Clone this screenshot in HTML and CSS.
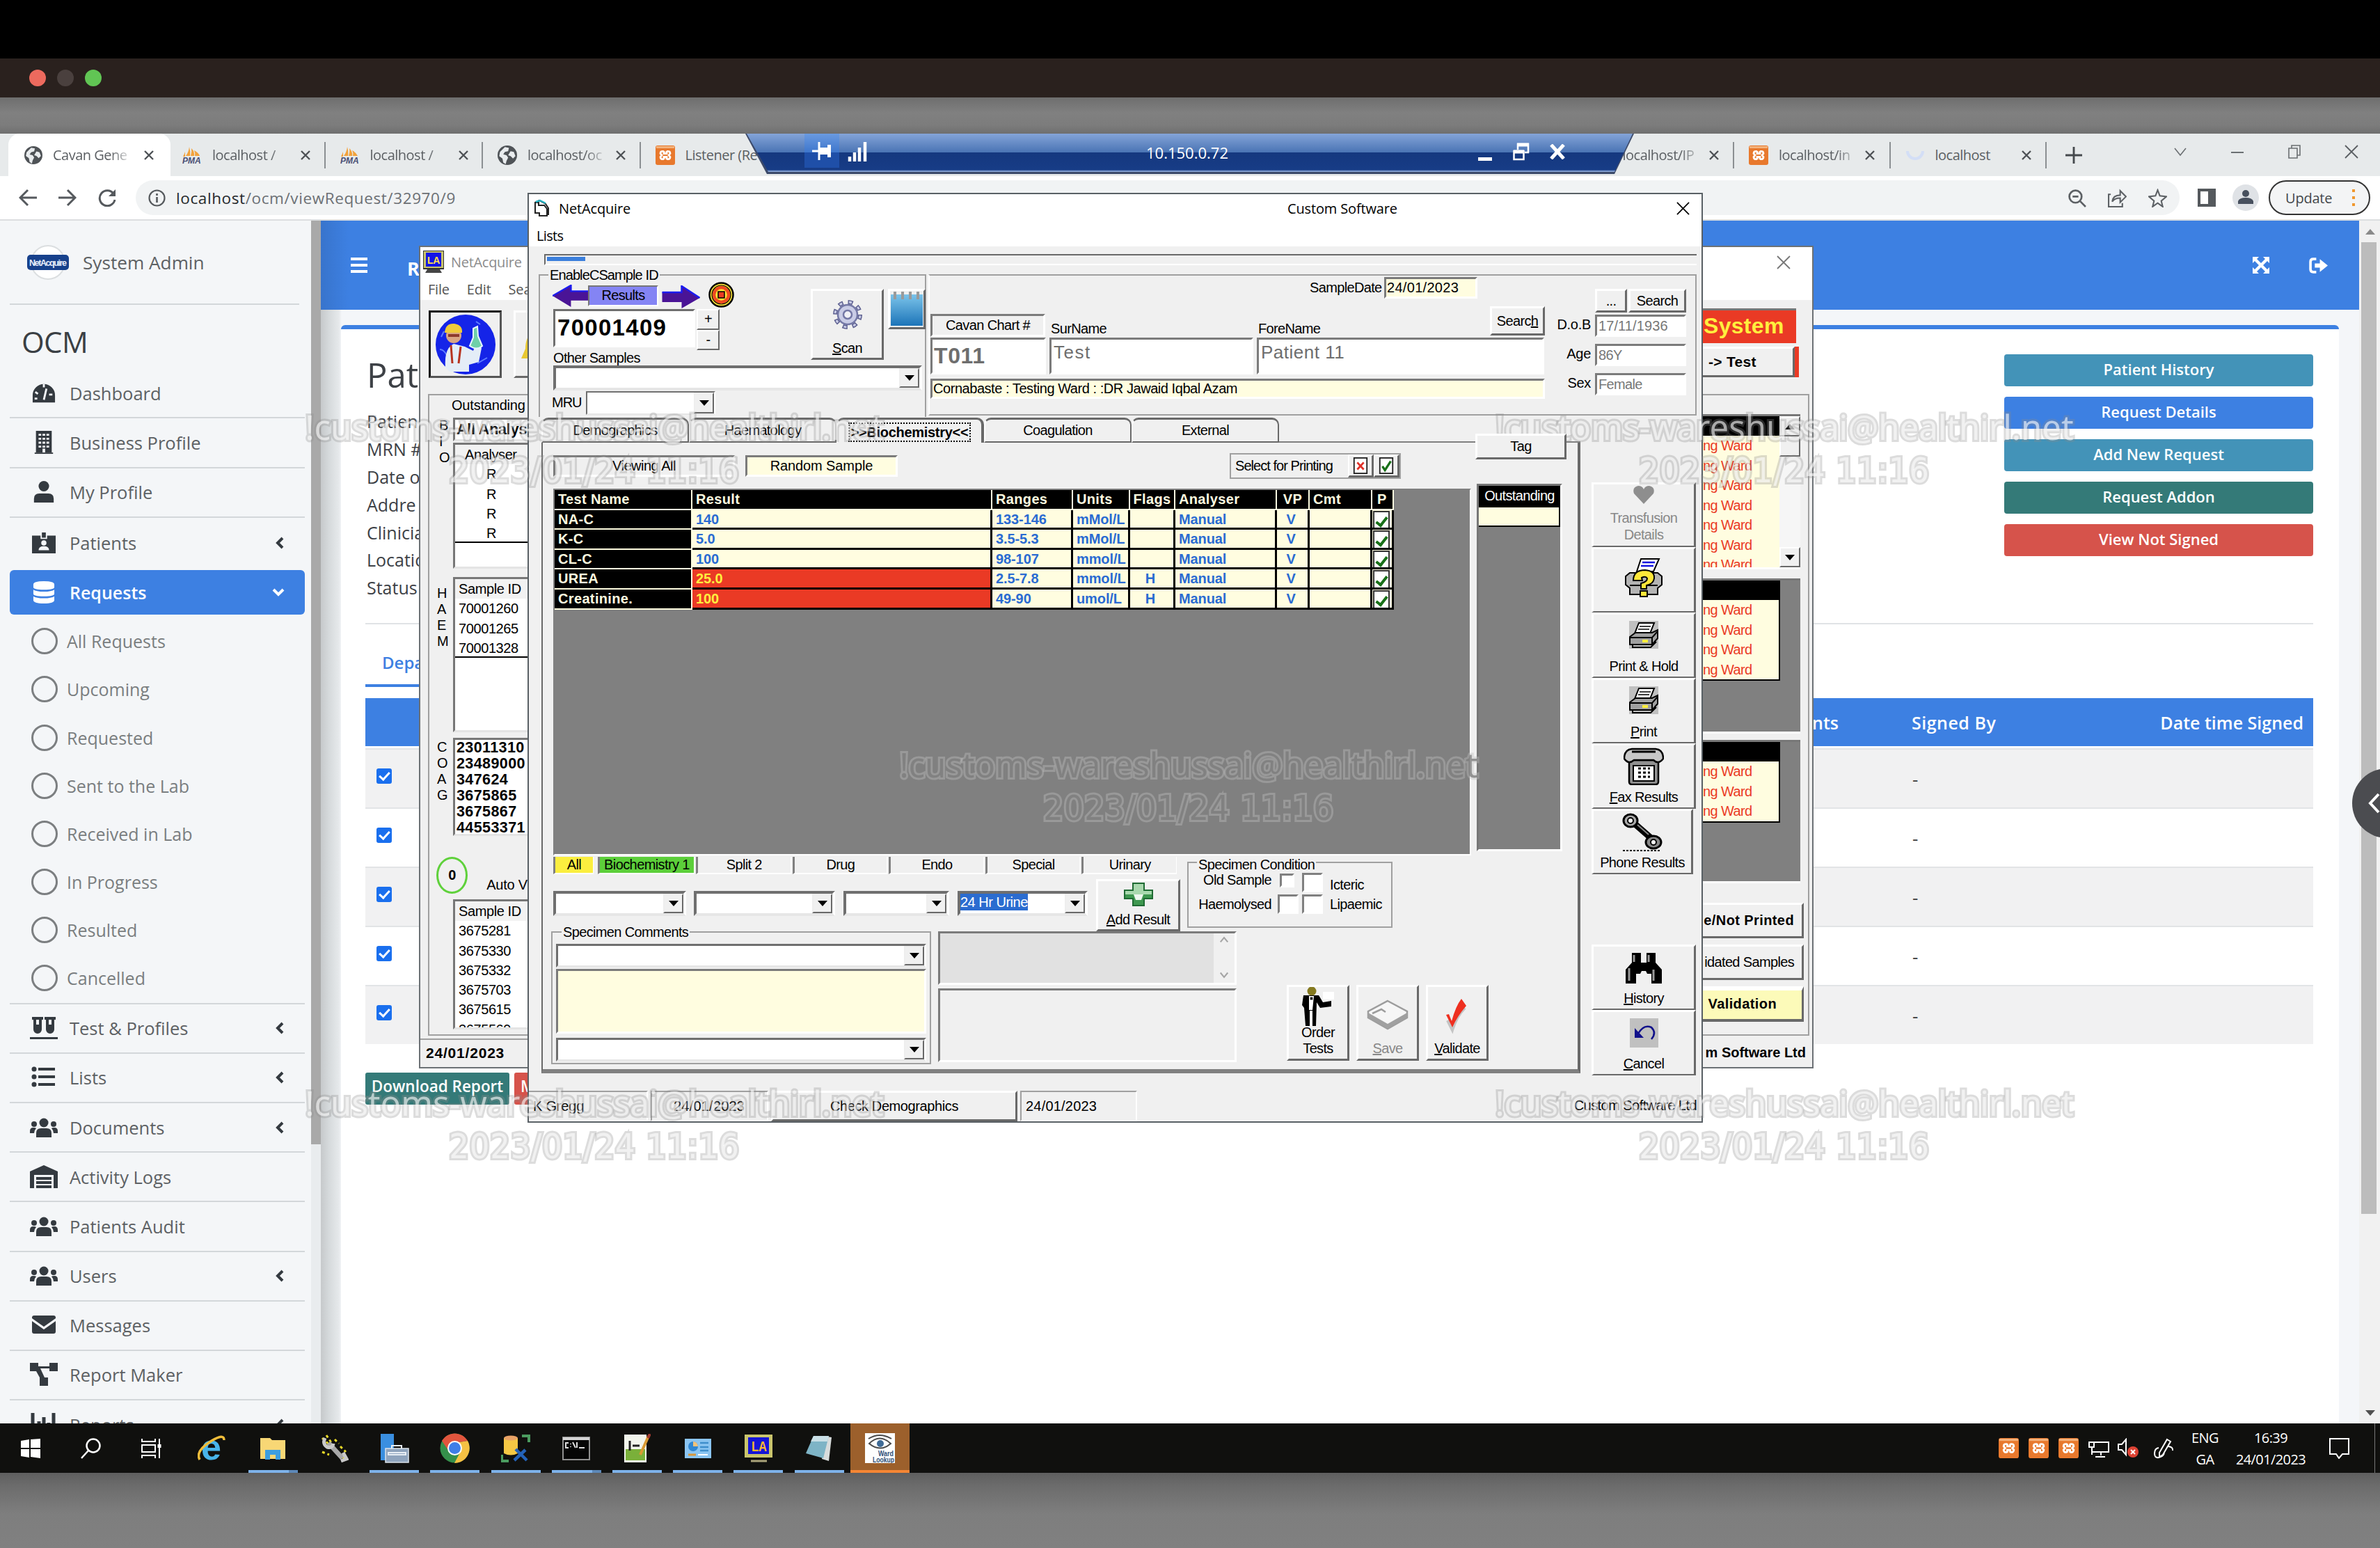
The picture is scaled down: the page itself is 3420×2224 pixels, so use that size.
FILE: index.html
```html
<!DOCTYPE html>
<html lang="en">
<head>
<meta charset="utf-8">
<title>10.150.0.72</title>
<link rel="stylesheet" href="styles.css">
</head>
<body>
<svg class="defs" xmlns="http://www.w3.org/2000/svg">
  <symbol id="globe" viewBox="0 0 24 24"><circle cx="12" cy="12" r="12" fill="#4f5357"/><path d="M9 2l5 1-1 4-4 1-2 3 4 1 2 3-2 4-1 4-3-2-1-5-4-3 1-5zM16 7l4 1 2 5-3 3-3-3-3-1z" fill="#e9ecee"/></symbol>
  <symbol id="pma" viewBox="0 0 28 26"><path d="M5 14Q9 9 10 1q2 7 1 13zM12 14q2-6 1-11 5 5 4 11zM18 14q1-4-1-8 6 3 8 8zM1 15q2-4 3-7v7z" fill="#f2a23c"/><text x="0" y="25" font-family="Liberation Sans" font-size="12" font-weight="700" font-style="italic" fill="#4a4f74">PMA</text></symbol>
  <symbol id="xampp" viewBox="0 0 28 28"><rect width="28" height="28" rx="3" fill="#e8792d"/><rect x="1" y="1" width="26" height="3" fill="#f3b27c"/><path d="M12 8.500q-5-1-5 3l2 2.500-2 2.500q0 4 5 3M16 8.500q5-1 5 3L19 14l2 2.500q0 4-5 3M12 8v3.500h4V8M12 20v-3.500h4V20" fill="none" stroke="#fff" stroke-width="2.800"/></symbol>
  <symbol id="cross" viewBox="0 0 16 16"><path d="M2 2l12 12M14 2L2 14" stroke="currentColor" stroke-width="2.4" fill="none"/></symbol>
  <symbol id="thin" viewBox="0 0 20 20"><path d="M1 1l18 18M19 1L1 19" stroke="currentColor" stroke-width="1.8" fill="none"/></symbol>
  <symbol id="group" viewBox="0 0 40 28"><circle cx="20" cy="7" r="6.5"/><circle cx="6" cy="9" r="4"/><circle cx="34" cy="9" r="4"/><path d="M9 28v-6q0-7 7-7h8q7 0 7 7v6zM0 22v-3q0-5 5-5 3 0 4 1-3 3-3 7zM40 22v-3q0-5-5-5-3 0-4 1 3 3 3 7z"/></symbol>
  <symbol id="left" viewBox="0 0 12 18"><path d="M10 2L3 9l7 7" fill="none" stroke="#343a40" stroke-width="4"/></symbol>
  <symbol id="arrow" viewBox="0 0 54 33"><path d="M0 16L28 0v9h26v14H28v10z" fill="#4a1496"/><path d="M0 16L28 0v9h26" fill="none" stroke="#1b1bf0" stroke-width="2.5"/></symbol>
  <symbol id="arrowr" viewBox="0 0 54 33"><path d="M54 18L28 1v9H0v14h28v9z" fill="#4a1496"/><path d="M0 10h28V1l26 17" fill="none" stroke="#1b1bf0" stroke-width="2.5"/></symbol>
  <symbol id="printer" viewBox="0 0 42 40"><rect width="42" height="40" fill="#c0c0c0"/><path d="M8 18L14 3h22l-6 15z" fill="#fff" stroke="#000" stroke-width="2"/><path d="M15 8h16M13 12h16" stroke="#000" stroke-width="1.6"/><path d="M1 23l8-6h24l8-4v12l-8 9H1z" fill="#a0a0a0" stroke="#000" stroke-width="2"/><path d="M1 24h32l8-9M33 24v9M5 34v4h26l8-8" fill="none" stroke="#000" stroke-width="2"/><rect x="19" y="27" width="8" height="4" fill="#ffef3e"/></symbol>
</svg>
<div class="black"></div>
<div class="macbar"><i class="red"></i><i class="dim"></i><i class="green"></i></div>
<div class="desktop">
<div class="remote">

  <div class="tabstrip">
    <div class="tab active"><svg class="fav"><use href="#globe"/></svg><span>Cavan Gene</span><svg class="x"><use href="#cross"/></svg></div>
    <div class="tab"><svg class="fav"><use href="#pma"/></svg><span>localhost /</span><svg class="x"><use href="#cross"/></svg></div>
    <div class="tab"><svg class="fav"><use href="#pma"/></svg><span>localhost /</span><svg class="x"><use href="#cross"/></svg></div>
    <div class="tab"><svg class="fav"><use href="#globe"/></svg><span>localhost/oc</span><svg class="x"><use href="#cross"/></svg></div>
    <div class="tab"><svg class="fav"><use href="#xampp"/></svg><span class="nofade">Listener (Re</span></div>
    <div class="tabs-right">
      <div class="tab"><svg class="fav"><use href="#xampp"/></svg><span>localhost/IP</span><svg class="x"><use href="#cross"/></svg></div>
      <div class="tab"><svg class="fav"><use href="#xampp"/></svg><span>localhost/in</span><svg class="x"><use href="#cross"/></svg></div>
      <div class="tab"><svg class="fav" viewBox="0 0 28 28"><path d="M3 8a11 11 0 0 0 22 0" fill="none" stroke="#d3def6" stroke-width="4"/></svg><span class="nofade">localhost</span><svg class="x"><use href="#cross"/></svg></div>
      <svg class="plus" viewBox="0 0 22 22"><path d="M11 0v22M0 11h22" stroke="#45494d" stroke-width="2.6"/></svg>
      <svg class="wc" viewBox="0 0 20 20"><path d="M2 5l8 10 8-10" fill="none" stroke="#6b6f72" stroke-width="1.6"/></svg>
      <svg class="wc" viewBox="0 0 20 20"><path d="M1 11h18" stroke="#6b6f72" stroke-width="2"/></svg>
      <svg class="wc" viewBox="0 0 20 20"><path d="M2 5h12v14H2zM6 5V1h12v14h-4" fill="none" stroke="#6b6f72" stroke-width="1.6"/></svg>
      <svg class="wc"><use href="#thin"/></svg>
    </div>
  </div>
  <div class="toolbar">
    <svg class="nav" viewBox="0 0 26 26"><path d="M26 13H2M13 2L2 13l11 11" fill="none" stroke="#55595d" stroke-width="3"/></svg>
    <svg class="nav" viewBox="0 0 26 26"><path d="M0 13h24M13 2l11 11-11 11" fill="none" stroke="#55595d" stroke-width="3"/></svg>
    <svg class="nav" viewBox="0 0 26 26"><path d="M22 7a11 11 0 1 0 2 9" fill="none" stroke="#55595d" stroke-width="3"/><path d="M25 1v10H15z" fill="#55595d"/></svg>
    <div class="omni">
      <svg width="25" height="25" viewBox="0 0 25 25"><circle cx="12.5" cy="12.5" r="11" fill="none" stroke="#55595d" stroke-width="2.2"/><path d="M12.500 11v8M12.500 6v3" stroke="#55595d" stroke-width="2.6"/></svg>
      <span class="url"><b>localhost</b>/ocm/viewRequest/32970/9</span>
      <svg class="oi first" viewBox="0 0 26 26"><circle cx="11" cy="11" r="8.500" fill="none" stroke="#5c6064" stroke-width="2.600"/><path d="M7 11h8M17 17l8 8" stroke="#5c6064" stroke-width="2.600"/></svg>
      <svg class="oi" viewBox="0 0 26 26"><path d="M4 8H1v17h19v-5M6 18q1-9 11-9V3l8 8-8 8v-6q-8 0-11 5z" fill="none" stroke="#5c6064" stroke-width="2"/></svg>
      <svg class="oi" viewBox="0 0 26 26"><path d="M13 2l3 8 9 1-7 6 2 8-7-5-7 5 2-8-7-6 9-1z" fill="none" stroke="#5c6064" stroke-width="2"/></svg>
    </div>
    <svg class="side" viewBox="0 0 26 26"><path d="M0 0h26v26H0zM4 4v18h11V4z" fill="#55595d" fill-rule="evenodd"/></svg>
    <svg class="ava" viewBox="0 0 38 38"><circle cx="19" cy="19" r="19" fill="#dfe2e6"/><circle cx="19" cy="13" r="5" fill="#47505e"/><path d="M8 28v-4q2-5 11-5t11 5v4z" fill="#47505e"/></svg>
    <div class="update">Update<i></i></div>
  </div>

  <div class="page">
    <aside>
      <div class="brand"><svg width="60" height="52" viewBox="0 0 60 52"><circle cx="30" cy="26" r="24" fill="#fff" stroke="#dbdee0" stroke-width="2"/><rect y="15" width="60" height="22" rx="5" fill="#17418c"/><text x="3" y="31" font-family="Liberation Sans" font-weight="700" font-size="12.500" fill="#e8eefa" textLength="54">NetAcquire</text></svg><span>System Admin</span></div>
      <h1>OCM</h1>
      <ul class="menu">
        <li><svg viewBox="0 0 40 36"><path d="M3 32V21a17 17 0 0 1 34 0v11z"/><path d="M20 28l4-17M20 4v5M7 16l4 3M33 20h-5M6 26h4" stroke="#f4f6f9" stroke-width="3"/></svg>Dashboard</li>
        <li><svg viewBox="0 0 40 36"><path d="M8 0h24v33H8z"/><path d="M12 6h16M12 12h16M12 18h16M12 24h16" stroke="#f4f6f9" stroke-width="3" stroke-dasharray="4 2"/><path d="M18 27h4v6h-4z" fill="#f4f6f9"/><path d="M6 33h28v2H6z"/></svg>Business Profile</li>
        <li><svg viewBox="0 0 40 36"><circle cx="20" cy="9" r="8"/><path d="M5 34v-6q0-8 8-8h14q8 0 8 8v6z"/></svg>My Profile</li>
        <li><svg viewBox="0 0 40 36"><path d="M2 7h13v5h10V7h13v27H2zM17 2h6v8h-6z"/><circle cx="20" cy="18" r="4" fill="#f4f6f9"/><path d="M12 29q0-6 8-6t8 6z" fill="#f4f6f9"/></svg>Patients<svg class="chev"><use href="#left"/></svg></li>
      </ul>
      <div class="current"><svg viewBox="0 0 32 34"><path d="M0 5q0-5 16-5t16 5v4q0 4-16 4T0 9zM0 13q4 3 16 3t16-3v6q0 4-16 4T0 19zM0 23q4 3 16 3t16-3v6q0 5-16 5T0 29z" fill="#fff"/></svg>Requests<svg class="down" viewBox="0 0 18 12"><path d="M2 2l7 7 7-7" fill="none" stroke="#fff" stroke-width="4"/></svg></div>
      <ul class="sub"><li>All Requests</li><li>Upcoming</li><li>Requested</li><li>Sent to the Lab</li><li>Received in Lab</li><li>In Progress</li><li>Resulted</li><li>Cancelled</li></ul>
      <ul class="menu">
        <li><svg viewBox="0 0 40 34"><path d="M3 1h16v4h-2v14a6 6 0 0 1-12 0V5H3zM21 1h16v4h-2v14a6 6 0 0 1-12 0V5h-2zM0 30h40v3H0z"/><path d="M9 5h4v7H9zM27 5h4v7h-4z" fill="#f4f6f9"/></svg>Test &amp; Profiles<svg class="chev"><use href="#left"/></svg></li>
        <li><svg viewBox="0 0 40 34"><path d="M12 5h24M12 16h24M12 27h24" stroke="#343a40" stroke-width="4"/><circle cx="6" cy="5" r="3.500"/><circle cx="6" cy="16" r="3.500"/><circle cx="6" cy="27" r="3.500"/></svg>Lists<svg class="chev"><use href="#left"/></svg></li>
        <li><svg><use href="#group"/></svg>Documents<svg class="chev"><use href="#left"/></svg></li>
        <li><svg viewBox="0 0 40 34"><path d="M0 33V9L20 0l20 9v24h-6V14H6v19z"/><path d="M9 17h22v4H9zM9 23h22v4H9zM9 29h22v4H9z"/></svg>Activity Logs</li>
        <li><svg><use href="#group"/></svg>Patients Audit</li>
        <li><svg><use href="#group"/></svg>Users<svg class="chev"><use href="#left"/></svg></li>
        <li><svg viewBox="0 0 40 30"><path d="M3 4q0-3 3-3h28q3 0 3 3v1L20 17 3 5zM3 9l17 12L37 9v15q0 3-3 3H6q-3 0-3-3z"/></svg>Messages</li>
        <li><svg viewBox="0 0 40 34"><path d="M0 0h12v5h16V0h12v12H28V8H15l6 13h5v12H14V21L9 12H0z"/></svg>Report Maker</li>
        <li><svg viewBox="0 0 40 34"><path d="M4 0v34M13 12v22M20 6v28M27 14v20M34 0v34" stroke="#343a40" stroke-width="5"/></svg>Reports<svg class="chev"><use href="#left"/></svg></li>
      </ul>
    </aside>
    <div class="asidebar"><i></i></div>
    <main>
      <header><svg width="24" height="22" viewBox="0 0 24 22"><path d="M0 2h24M0 11h24M0 20h24" stroke="#fff" stroke-width="4"/></svg><b>R</b>
        <svg class="ex" viewBox="0 0 24 24"><path d="M0 0h9L6 3l6 6 6-6-3-3h9v9l-3-3-6 6 6 6 3-3v9h-9l3-3-6-6-6 6 3 3H0v-9l3 3 6-6-6-6-3 3z" fill="#fff"/></svg>
        <svg class="out" viewBox="0 0 26 22"><path d="M10 2H6Q2 2 2 6v10q0 4 4 4h4" fill="none" stroke="#fff" stroke-width="3.500"/><path d="M8 8h7V2l11 9-11 9v-6H8z" fill="#fff"/></svg>
      </header>
      <section class="card">
        <div class="top">
          <div class="facts"><h2>Pat</h2><p>Patien</p><p>MRN #</p><p>Date o</p><p>Addre</p><p>Clinicia</p><p>Locatio</p><p>Status</p></div>
          <div class="actions"><a class="teal">Patient History</a><a class="blue">Request Details</a><a class="teal">Add New Request</a><a class="green">Request Addon</a><a class="redb">View Not Signed</a></div>
        </div>
        <div class="depts"><span>Depa</span></div>
        <div class="thead"><span class="c1">nts</span><span class="c2">Signed By</span><span class="c3">Date time Signed</span></div>
        <div class="tr"><i></i><span>-</span></div><div class="tr"><i></i><span>-</span></div><div class="tr"><i></i><span>-</span></div><div class="tr"><i></i><span>-</span></div><div class="tr"><i></i><span>-</span></div>
        <div class="dl"><a>Download Report</a><a class="m">M</a></div>
      </section>
    </main>
    <div class="scroll"><svg viewBox="0 0 14 8"><path d="M7 0l7 8H0z" fill="#8a8a8a"/></svg><i></i><svg class="dn" viewBox="0 0 14 8"><path d="M7 8l7-8H0z" fill="#505050"/></svg></div>
  </div>

  <div class="win back">
    <div class="bleft">
      <div class="btitle"><svg width="30" height="32" viewBox="0 0 30 32"><rect width="30" height="26" fill="#c9c46c" stroke="#333" stroke-width="2"/><rect x="4" y="3" width="22" height="20" fill="#1414e6"/><text x="6" y="19" font-family="Liberation Sans" font-weight="700" font-size="15" fill="#ffe04a" textLength="18" lengthAdjust="spacingAndGlyphs">LA</text><path d="M6 27h18l3 5H3z" fill="#444"/></svg>NetAcquire</div>
      <div class="bmenu"><span>File</span><span>Edit</span><span>Sea</span></div>
      <div class="btools">
        <div class="photo"><svg width="86" height="86" viewBox="0 0 86 86"><circle cx="43" cy="43" r="43" fill="#1524e8"/><path d="M6 50q10 0 16 26M60 70l14-8M58 10l6 4M12 24l-4 8" stroke="#5f7dff" stroke-width="2" fill="none"/><path d="M14 76q-2-28 12-34l16 4 12 6 4-10 8 6-4 20-14 4v10H20z" fill="#e4edf7"/><circle cx="26" cy="30" r="11" fill="#d9a583"/><path d="M13 26q1-14 14-13 12 2 11 13z" fill="#f0cb3b"/><path d="M18 28h16v4H18z" fill="#8d3a2c"/><path d="M54 20l6-3 1 14 6 14q-8 7-18 0l5-12z" fill="#6fd0a8" stroke="#e7f5ff" stroke-width="2"/><path d="M22 44l2 26M36 46l-3 24" stroke="#b7331f" stroke-width="3"/></svg></div>
        <div class="bell"><svg width="22" height="86" viewBox="0 0 22 86"><path d="M14 6l8-4v18q-8-4-8-14z" fill="#2b2b66"/><path d="M22 26q-12 8-12 26L4 66h18z" fill="#e8c832"/><path d="M22 30q-9 8-8 22h8z" fill="#77b93a"/></svg></div>
      </div>
      <div class="bframe">
        <p class="bout">Outstanding</p>
        <div class="brow r1"><div class="vl"><span>B</span><span>I</span><span>O</span></div><div><div class="blist alla">All Analyse</div><div class="blist an"><p>Analyser</p><p>R</p><p>R</p><p>R</p><p class="ul">R</p></div></div></div>
        <div class="brow r2"><div class="vl"><span>H</span><span>A</span><span>E</span><span>M</span></div><div class="blist hae"><p class="h">Sample ID</p><p>70001260</p><p>70001265</p><p class="ul">70001328</p></div></div>
        <div class="brow r3"><div class="vl"><span>C</span><span>O</span><span>A</span><span>G</span></div><div class="blist coa"><p>23011310</p><p>23489000</p><p>347624</p><p>3675865</p><p>3675867</p><p>44553371</p></div></div>
        <div class="auto"><b>0</b><span>Auto V</span></div>
        <div class="blist smp"><p class="h">Sample ID</p><p>3675281</p><p>3675330</p><p>3675332</p><p>3675703</p><p>3675615</p><p>3675569</p></div>
      </div>
      <div class="bstat">24/01/2023</div>
    </div>
    <div class="bright">
      <div class="bclose"><svg width="20" height="20"><use href="#thin"/></svg></div>
      <div class="sys">System</div>
      <div class="totest"><span>-&gt; Test</span></div>
      <div class="rframe">
        <div class="wl w1"><div class="rows"><h4></h4><p>ng Ward</p><p>ng Ward</p><p>ng Ward</p><p>ng Ward</p><p>ng Ward</p><p>ng Ward</p><p>ng Ward</p></div><div class="vs"><i class="up"></i><i></i><s></s><i class="dw"></i></div></div>
        <div class="wl w2"><div class="rows"><h4></h4><p>ng Ward</p><p>ng Ward</p><p>ng Ward</p><p>ng Ward</p></div></div>
        <div class="wl w3"><div class="rows"><h4></h4><p>ng Ward</p><p>ng Ward</p><p>ng Ward</p></div></div>
        <div class="rb"><b>e/Not Printed</b></div><div class="rb">idated Samples</div><div class="rb yl"><b>Validation</b></div>
      </div>
      <div class="rstat">m Software Ltd</div>
    </div>
  </div>

  <div class="win main">
    <div class="title"><svg width="24" height="28" viewBox="0 0 24 28"><path d="M2 6h5v4h8l4 5v10H8v-4H2z" fill="#fff" stroke="#222" stroke-width="2"/><path d="M2 6l6-3 9 5 4 6v10" fill="none" stroke="#222" stroke-width="2"/><path d="M3 5l6-2 8 4" stroke="#26b3c4" stroke-width="2.500" fill="none"/></svg><span class="t1">NetAcquire</span><span>Custom Software</span><svg class="cl" width="19" height="19"><use href="#thin"/></svg></div>
    <div class="mmenu">Lists</div>
    <div class="prog"><i></i></div>
    <div class="frames">
      <div class="f1">
        <span class="lg">EnableCSample ID</span>
        <div class="f1a">
          <div class="idcol">
            <div class="arrows"><svg width="51" height="33"><use href="#arrow"/></svg><div class="results">Results</div><svg class="fwd" width="55" height="33"><use href="#arrowr"/></svg><svg class="coin" width="37" height="37" viewBox="0 0 37 37"><circle cx="18.500" cy="18.500" r="17" fill="#ffe636" stroke="#000" stroke-width="2.500"/><circle cx="18.500" cy="18.500" r="10.500" fill="#ffe636" stroke="#f04a20" stroke-width="4.500"/><circle cx="18.500" cy="18.500" r="13.500" fill="none" stroke="#000" stroke-width="1.200"/><rect x="14" y="14" width="9" height="9" fill="#e83a22" stroke="#000" stroke-width="1.500"/></svg></div>
            <div class="idrow"><div class="id">70001409</div><div class="spin"><i>+</i><i>-</i></div></div>
            <div class="os">Other Samples</div>
          </div>
          <div class="btn scan"><svg width="46" height="46" viewBox="0 0 46 46"><circle cx="23" cy="23" r="18" fill="none" stroke="#5d6090" stroke-width="6" stroke-dasharray="7 7.140"/><circle cx="23" cy="23" r="18" fill="none" stroke="#c9cce6" stroke-width="3" stroke-dasharray="4 10.140" stroke-dashoffset="-1.500"/><circle cx="23" cy="23" r="14" fill="#c9cce6" stroke="#7478a6" stroke-width="2.500"/><circle cx="23" cy="23" r="6" fill="#f0f0f6" stroke="#7478a6" stroke-width="2.500"/></svg><span><u>S</u>can</span></div>
          <div class="btn note"><svg width="50" height="52" viewBox="0 0 50 52"><defs><linearGradient id="nb" x2="0" y2="1"><stop offset="0" stop-color="#7cc4ea"/><stop offset="1" stop-color="#1c74b8"/></linearGradient></defs><rect x="2" y="5" width="46" height="45" fill="url(#nb)"/><path d="M8 1v11M19 1v11M30 1v11M41 1v11" stroke="#9a9a9a" stroke-width="4"/></svg></div>
        </div>
        <div class="combo cos"><i></i></div>
        <div class="mru"><span>MRU</span><div class="combo"><i></i></div></div>
      </div>
      <div class="f2">
        <div class="pl">
          <div class="sd"><span>SampleDate</span><div class="in yel">24/01/2023</div></div>
          <div class="lbls"><div class="in cc">Cavan Chart #</div><span class="sn">SurName</span><span class="fn">ForeName</span><div class="btn se">Searc<u>h</u></div></div>
          <div class="vals"><div class="in v1">T011</div><div class="in v2">Test</div><div class="in v3">Patient 11</div></div>
          <div class="in yel addr">Cornabaste : Testing Ward : :DR Jawaid Iqbal Azam</div>
        </div>
        <div class="pr">
          <div class="prb"><div class="btn dots">...</div><div class="btn">Search</div></div>
          <div class="prr"><span>D.o.B</span><div class="in dob">17/11/1936</div></div>
          <div class="prr"><span>Age</span><div class="in">86Y</div></div>
          <div class="prr"><span>Sex</span><div class="in">Female</div></div>
        </div>
      </div>
    </div>
    <div class="body">
      <div class="sheet">
        <div class="tabs"><div class="tb">Demographics</div><div class="tb">Haematology</div><div class="tb on"><b>&gt;&gt;Biochemistry&lt;&lt;</b></div><div class="tb">Coagulation</div><div class="tb">External</div><div class="fill"><div class="btn tag">Tag</div></div></div>
        <div class="pane">
          <div class="r0"><div class="in va">Viewing All</div><div class="in yel rs">Random Sample</div><div class="sfp">Select for Printing<div class="btn pb"><svg viewBox="0 0 22 26"><rect x="1" y="1" width="20" height="24" fill="#fff" stroke="#222" stroke-width="2"/><path d="M6 8l10 11M16 8L6 19" stroke="#e03028" stroke-width="3"/></svg></div><div class="btn pb"><svg viewBox="0 0 22 26"><rect x="1" y="1" width="20" height="24" fill="#fff" stroke="#222" stroke-width="2"/><path d="M5 14l4 6 9-14" fill="none" stroke="#187018" stroke-width="3.500"/></svg></div></div></div>
          <div class="r00">
            <div class="grid">
              <div class="g hd"><span>Test Name</span><span>Result</span><span>Ranges</span><span>Units</span><span>Flags</span><span>Analyser</span><span>VP</span><span>Cmt</span><span>P</span></div>
              <div class="g"><span>NA-C</span><span>140</span><span>133-146</span><span>mMol/L</span><span></span><span>Manual</span><span>V</span><span></span><span class="ck"></span></div>
              <div class="g"><span>K-C</span><span>5.0</span><span>3.5-5.3</span><span>mMol/L</span><span></span><span>Manual</span><span>V</span><span></span><span class="ck"></span></div>
              <div class="g"><span>CL-C</span><span>100</span><span>98-107</span><span>mmol/L</span><span></span><span>Manual</span><span>V</span><span></span><span class="ck"></span></div>
              <div class="g hi"><span>UREA</span><span>25.0</span><span>2.5-7.8</span><span>mmol/L</span><span>H</span><span>Manual</span><span>V</span><span></span><span class="ck"></span></div>
              <div class="g hi"><span>Creatinine.</span><span>100</span><span>49-90</span><span>umol/L</span><span>H</span><span>Manual</span><span>V</span><span></span><span class="ck"></span></div>
            </div>
            <div class="outs"><h5>Outstanding</h5><p></p></div>
          </div>
          <div class="r3a">
            <div class="left3">
              <div class="cats"><span class="all">All</span><span class="bio">Biochemistry 1</span><span>Split 2</span><span>Drug</span><span>Endo</span><span>Special</span><span>Urinary</span></div>
              <div class="combos"><div class="combo k1"><i></i></div><div class="combo k2"><i></i></div><div class="combo k3"><i></i></div><div class="combo k4"><em>24 Hr Urine</em><i></i></div>
                <div class="btn add"><svg width="44" height="34" viewBox="0 0 44 34"><path d="M14 1h16v10h12v12H30v10H14V23H2V11h12z" fill="#3f9850" stroke="#1f6b33" stroke-width="2"/><path d="M15 2h14v10h12v5H3v-5h12z" fill="#a9d8ae"/><path d="M15 17h14l-3 8h-8z" fill="#eef7ef"/></svg><span><u>A</u>dd Result</span></div></div>
            </div>
            <div class="cond"><span class="lg">Specimen Condition</span>
              <div class="cr"><span>Old Sample</span><i class="sm"></i><i></i><span>Icteric</span></div>
              <div class="cr"><span>Haemolysed</span><i></i><i></i><span>Lipaemic</span></div>
            </div>
          </div>
          <div class="r4">
            <div class="comm"><span class="lg">Specimen Comments</span><div class="combo"><i></i></div><div class="in yel ta"></div><div class="combo"><i></i></div></div>
            <div class="boxes"><div class="in gb"><svg viewBox="0 0 12 60"><path d="M1 8l5-6 5 6M1 50l5 6 5-6" fill="none" stroke="#a5a5a5" stroke-width="2"/></svg></div><div class="in gb2"></div></div>
            <div class="btn ab"><svg width="54" height="56" viewBox="0 0 54 56"><circle cx="18" cy="6" r="6.500" fill="#857a20"/><path d="M6 12h22l6 10 12-2v8l-16 2-5-8-1 34h-5V34h-4v22H9L7 30l-3-4z" fill="#000"/><path d="M14 13h7l-2 20h-5z" fill="#fff"/><path d="M16 15l3 3M19 15l-3 3" stroke="#000" stroke-width="2"/><path d="M34 7h16v11H34z" fill="#fff"/></svg><span>Order<br>Tests</span></div>
            <div class="btn ab dis"><svg width="60" height="56" viewBox="0 0 60 56"><path d="M30 12l28 15v9L30 52 2 36v-9z" fill="#f6f6f6" stroke="#9c9c9c" stroke-width="2.500"/><path d="M2 29l28 16 28-16v7L30 52 2 36z" fill="#a0a0a0"/><path d="M8 30l13-6 6 4" fill="none" stroke="#9c9c9c" stroke-width="2.500"/></svg><span><u>S</u>ave</span></div>
            <div class="btn ab"><svg width="50" height="60" viewBox="0 0 50 60"><path d="M11 40l7 14q6-20 18-32" fill="none" stroke="#c4c4c4" stroke-width="4"/><path d="M9 32l4-1 4 10q6-22 14-32l7 10Q25 34 18 50z" fill="#ee2f1f"/></svg><span><u>V</u>alidate</span></div>
          </div>
        </div>
      </div>
      <div class="rail">
        <div class="btn dis"><svg width="30" height="26" viewBox="0 0 30 26"><path d="M15 26L1 11Q-2 2 7 0q6 0 8 5 2-5 8-5 9 2 6 11z" fill="#8e8e8e"/></svg><span>Transfusion<br>Details</span></div>
        <div class="btn hp"><svg width="56" height="58" viewBox="0 0 56 58"><path d="M8 22h40l6 5v12l-6 5v9H8v-9l-6-5V27z" fill="#b4b4b4" stroke="#000" stroke-width="2"/><path d="M8 40h40" stroke="#000" stroke-width="2"/><path d="M18 20l6-18h26l-8 18z" fill="#fff" stroke="#000" stroke-width="2"/><path d="M26 7h18M24 12h18" stroke="#1111e0" stroke-width="2.500"/><path d="M13 33q0-15 17-15 14 1 13 12-1 8-11 10v5h-8v-8q9-2 9-7-2-4-8-1l1 4z" fill="#ffe739" stroke="#000" stroke-width="2"/><rect x="23" y="48" width="10" height="8" fill="#ffe739" stroke="#000" stroke-width="2"/></svg></div>
        <div class="btn"><svg width="42" height="40"><use href="#printer"/></svg><span>Print &amp; Hold</span></div>
        <div class="btn"><svg width="42" height="40"><use href="#printer"/></svg><span><u>P</u>rint</span></div>
        <div class="btn"><svg width="58" height="54" viewBox="0 0 58 54"><path d="M8 18h42v31q0 4-4 4H12q-4 0-4-4z" fill="#909090" stroke="#000" stroke-width="2.500"/><path d="M1 16Q1 3 12 2h34q11 1 11 14-7 9-14 2H15q-8 7-14-2z" fill="#c8c8c8" stroke="#000" stroke-width="2.500"/><path d="M12 6h34" stroke="#000" stroke-width="3"/><rect x="14" y="26" width="30" height="22" fill="#fff" stroke="#000" stroke-width="2"/><path d="M21 30h17M21 36h17M21 42h17" stroke="#000" stroke-width="3" stroke-dasharray="4 3"/></svg><span><u>F</u>ax Results</span></div>
        <div class="btn ph"><svg width="58" height="56" viewBox="0 0 58 56"><path d="M14 12l32 28" stroke="#000" stroke-width="9"/><ellipse cx="12" cy="11" rx="10" ry="9" fill="#aaa" stroke="#000" stroke-width="3"/><ellipse cx="45" cy="42" rx="11" ry="9" fill="#888" stroke="#000" stroke-width="3"/><circle cx="12" cy="11" r="4" fill="#fff" stroke="#000" stroke-width="2"/><circle cx="45" cy="42" r="4" fill="#fff" stroke="#000" stroke-width="2"/><path d="M22 17l16 14" stroke="#888" stroke-width="2"/><path d="M1 54h53" stroke="#000" stroke-width="2" stroke-dasharray="3 2"/></svg><span>Phone Results</span></div>
        <div class="btn hist"><svg width="52" height="44" viewBox="0 0 52 44"><path d="M9 0h13v14h8V0h13v14l9 10v20H37V30h-6l-2-4h-6l-2 4h-6v14H0V24l9-10z" fill="#000"/><path d="M12 3v10M33 3v10M5 22v18M40 24v16" stroke="#999" stroke-width="3"/></svg><span><u>H</u>istory</span></div>
        <div class="btn canc"><svg width="41" height="42" viewBox="0 0 41 42"><rect width="41" height="42" fill="#c0c0c0"/><path d="M12 22q8-14 19-9 8 8 0 17" fill="none" stroke="#10108a" stroke-width="2.500"/><path d="M7 14v14h13z" fill="#10108a"/></svg><span><u>C</u>ancel</span></div>
      </div>
    </div>
    <div class="stat"><div class="s1">K Gregg</div><div class="s2">24/01/2023</div><div class="btn s3">Check Demographics</div><div class="s4">24/01/2023</div><span>Custom Software Ltd</span></div>
  </div>

  <div class="rdp"><div class="bar">
    <span class="pin"><svg width="29" height="26" viewBox="0 0 29 26"><path d="M0 13h10M10 0v26" stroke="#fff" stroke-width="3"/><path d="M10 8h12V4h5v18h-5v-4H10z" fill="#fff"/></svg></span>
    <svg class="sig" width="28" height="28" viewBox="0 0 28 28"><path d="M3 21v7M10 15v13M17 8v20M25 0v28" stroke="#fff" stroke-width="4.500"/></svg>
    <span class="ip">10.150.0.72</span>
    <i class="mn"></i>
    <svg class="rs2" width="24" height="26" viewBox="0 0 24 26"><path d="M7 10V2h15v12h-5" fill="none" stroke="#fff" stroke-width="2.500"/><path d="M6 3h17" stroke="#fff" stroke-width="5"/><path d="M1.500 12h14v12h-14z" fill="none" stroke="#fff" stroke-width="2.500"/><path d="M1 13h15" stroke="#fff" stroke-width="5"/></svg>
    <svg width="24" height="22" viewBox="0 0 24 22"><path d="M3 1l18 20M21 1L3 21" stroke="#fff" stroke-width="5"/></svg>
  </div></div>

  <div class="wm a"><p>!customs-wareshussai@healthirl.net</p><p>2023/01/24 11:16</p></div>
  <div class="wm b"><p>!customs-wareshussai@healthirl.net</p><p>2023/01/24 11:16</p></div>
  <div class="wm c"><p>!customs-wareshussai@healthirl.net</p><p>2023/01/24 11:16</p></div>
  <div class="wm d"><p>!customs-wareshussai@healthirl.net</p><p>2023/01/24 11:16</p></div>
  <div class="wm e"><p>!customs-wareshussai@healthirl.net</p><p>2023/01/24 11:16</p></div>

  <div class="handle"><svg width="20" height="30" viewBox="0 0 20 30"><path d="M16 2L4 15l12 13" fill="none" stroke="#fff" stroke-width="4"/></svg></div>

  <div class="taskbar">
    <div class="tk"><svg width="28" height="28" viewBox="0 0 28 28"><path d="M0 3l12-2v12H0zM14 1l14-1v13H14zM0 15h12v12L0 25zM14 15h14v13l-14-2z" fill="#fff"/></svg></div>
    <div class="tk"><svg width="30" height="30" viewBox="0 0 30 30"><circle cx="18" cy="11" r="9.500" fill="none" stroke="#fff" stroke-width="2.500"/><path d="M11 18L1 29" stroke="#fff" stroke-width="2.500"/></svg></div>
    <div class="tk"><svg width="30" height="28" viewBox="0 0 30 28"><path d="M1 0v4h19V0M1 9h19v10H1zM1 28v-4h19v4M26 0v28" fill="none" stroke="#fff" stroke-width="2"/><path d="M26 8v5" stroke="#fff" stroke-width="5"/></svg></div>
    <div class="tk"><svg width="42" height="40" viewBox="0 0 42 40"><text x="5" y="36" font-family="Liberation Sans" font-weight="700" font-size="52" fill="#48b4ea">e</text><path d="M3 36Q-4 24 20 9 38-2 38 8" fill="none" stroke="#f0bd3a" stroke-width="3.500"/></svg></div>
    <div class="tk run two"><svg width="38" height="34" viewBox="0 0 38 34"><path d="M1 2h14l3 3h19v27H1z" fill="#f8d775"/><path d="M8 33V19h22v14h-7v-7h-8v7z" fill="#3c9ee0"/></svg></div>
    <div class="tk"><svg width="42" height="42" viewBox="0 0 42 42"><path d="M4 6l34 32M10 2l8 12M30 18l8 8M4 26l10 4M22 8l6 6" stroke="#e8d928" stroke-width="3" stroke-dasharray="4 4"/><path d="M13 13l20 22" stroke="#a8a8a8" stroke-width="7"/><path d="M8 6q-4 8 3 13 8 2 9-5M34 27l5 9-8 3" fill="none" stroke="#c9c9c9" stroke-width="5"/></svg></div>
    <div class="tk run"><svg width="42" height="44" viewBox="0 0 42 44"><path d="M1 1h19v38H1z" fill="#3a8fe0"/><path d="M8 22h33v20H8z" fill="#8fa4bd" stroke="#dbe3ec" stroke-width="1.500"/><path d="M17 22v-4h14v4M12 28h25v3H12z" fill="none" stroke="#e8eef4" stroke-width="2"/></svg></div>
    <div class="tk run"><svg width="43" height="43" viewBox="0 0 43 43"><circle cx="21.500" cy="21.500" r="21" fill="#35904b"/><path d="M40 11a21.500 21.500 0 0 1-19 32l9-17-8-12z" fill="#f5c143"/><path d="M3 11l10 15 9-12L40 11A21.500 21.500 0 0 0 3 11z" fill="#e2553d"/><circle cx="21.500" cy="21.500" r="10.500" fill="#fff"/><circle cx="21.500" cy="21.500" r="8.500" fill="#3f7ee8"/></svg></div>
    <div class="tk run"><svg width="42" height="40" viewBox="0 0 42 40"><path d="M4 5h20v22q-10 5-20 0z" fill="#f5c844"/><ellipse cx="14" cy="5" rx="10" ry="3.500" fill="#e8a266"/><path d="M30 2h10v9M1 29v9h10" fill="none" stroke="#4b9b5f" stroke-width="4"/><path d="M19 37l16-15M21 21l16 16" stroke="#2362b8" stroke-width="4.500"/></svg></div>
    <div class="tk run two"><svg width="40" height="34" viewBox="0 0 40 34"><rect x="1" y="1" width="38" height="32" fill="#050505" stroke="#8f8f8f" stroke-width="2"/><path d="M1 1h38v4H1z" fill="#d4d4d4"/><path d="M9 9H5v7h4M12 10v1M12 14v1M15 8l4 8M21 8v8M24 16h8" fill="none" stroke="#ddd" stroke-width="2"/></svg></div>
    <div class="tk run"><svg width="40" height="42" viewBox="0 0 40 42"><path d="M2 1h32v40H2z" fill="#f2f5ec"/><path d="M4 22h28v16H4z" fill="#7ab03a"/><path d="M10 10v14M14 17h10" stroke="#222" stroke-width="3"/><path d="M37 3L25 30" stroke="#d99a33" stroke-width="4"/><path d="M39 0l-3 6" stroke="#a03a30" stroke-width="4"/></svg></div>
    <div class="tk run"><svg width="38" height="28" viewBox="0 0 38 28"><path d="M0 0h38v28H0z" fill="#8bc5f2"/><circle cx="12" cy="11" r="7" fill="#2f87d4"/><path d="M12 11V4a7 7 0 0 1 7 7z" fill="#f2c27a"/><path d="M22 6h12M22 12h12M22 17h12" stroke="#3e8ecc" stroke-width="2.500"/><path d="M5 23h11" stroke="#d8973a" stroke-width="3"/><path d="M19 23h14" stroke="#fff" stroke-width="2"/></svg></div>
    <div class="tk run"><svg width="40" height="40" viewBox="0 0 40 40"><rect width="40" height="33" fill="#c9c46c"/><rect x="5" y="4" width="30" height="24" fill="#1414d8"/><text x="10" y="24" font-family="Liberation Sans" font-weight="700" font-size="21" fill="#ffb92e" textLength="22" lengthAdjust="spacingAndGlyphs">LA</text><path d="M9 38h23" stroke="#aaa37a" stroke-width="3"/></svg></div>
    <div class="tk run"><svg width="40" height="40" viewBox="0 0 40 40"><path d="M26 2l12 2-4 34-10-3z" fill="#d8dcdc"/><path d="M12 2h22l-8 32L1 27z" fill="#7eb4c6"/><path d="M12 2h22l-2 8H8z" fill="#c9dfe6"/></svg></div>
    <div class="tk cur"><svg width="43" height="43" viewBox="0 0 43 43"><rect width="43" height="43" fill="#fdfdfd"/><path d="M6 15q15-15 31 0-15 13-31 0zM5 8q16-10 33 0" fill="none" stroke="#4a4a4a" stroke-width="2"/><circle cx="22" cy="15" r="5" fill="#3f6b96"/><text x="19" y="33" font-family="Liberation Sans" font-weight="700" font-size="10" fill="#2d4d77" textLength="22" lengthAdjust="spacingAndGlyphs">Ward</text><text x="11" y="42" font-family="Liberation Sans" font-weight="700" font-size="10" fill="#2d4d77" textLength="31" lengthAdjust="spacingAndGlyphs">Lookup</text></svg></div>
    <div class="tray">
      <svg class="xa"><use href="#xampp"/></svg><svg class="xa"><use href="#xampp"/></svg><svg class="xa"><use href="#xampp"/></svg>
      <svg class="net" width="30" height="28" viewBox="0 0 30 28"><path d="M9 5h20v14H5M1 5h7v7H1zM5 12v11M18 19v5M10 26h14" fill="none" stroke="#fff" stroke-width="2"/></svg>
      <svg class="vol" width="32" height="30" viewBox="0 0 32 30"><path d="M1 9h5l6-7v22l-6-7H1z" fill="none" stroke="#fff" stroke-width="2"/><circle cx="22" cy="20" r="8" fill="#dd4334"/><path d="M19 17l6 6M25 17l-6 6" stroke="#fff" stroke-width="2"/></svg>
      <svg class="pen" width="30" height="30" viewBox="0 0 30 30"><path d="M20 2l5 3L14 24l-5 3v-6zM8 14q-6 1-6 8t6 6q6-1 8-6M22 12q7 1 6 6" fill="none" stroke="#fff" stroke-width="2"/></svg>
      <span class="lang">ENG<br>GA</span><span class="clock">16:39<br>24/01/2023</span>
      <svg class="nt" width="29" height="30" viewBox="0 0 29 30"><path d="M1 1h27v22h-9l-5 6-4-6H1z" fill="none" stroke="#fff" stroke-width="2"/></svg>
      <i class="peek"></i>
    </div>
  </div>
</div>
</div>
</body>
</html>
```
FILE: styles.css
```css
*{box-sizing:border-box;margin:0;padding:0}
body{width:3420px;height:2224px;overflow:hidden;background:#808080;font-family:"Open Sans","Liberation Sans",sans-serif}
.defs{position:absolute;width:0;height:0}
svg{display:block;flex:none}
ul{list-style:none}
.black{height:84px;background:#000}
.macbar{height:56px;background:#2a211e;display:flex;align-items:center;padding-left:42px;gap:16px}
.macbar i{width:24px;height:24px;border-radius:50%}
.macbar .red{background:#ed6a5e}.macbar .dim{background:#4a403e}.macbar .green{background:#61c554}
.desktop{height:2084px;padding-top:52px;background:linear-gradient(#6e6e6e,#808080 22px,#7c7c7c 40px,#6f6f6f 52px,#5f5f5f 1976px,#6c6c6c 1995px,#7e7e7e 2035px,#808080)}
.remote{position:relative;width:3420px;height:1924px;overflow:hidden;background:#fff}

/* browser */
.tabstrip{height:61px;display:flex;background:#e7eaeb;padding-left:12px;color:#5b5f63;font-size:20px}
.tab{flex:none;width:226.500px;height:61px;display:flex;align-items:center;padding-left:21px;position:relative}
.tab:after{content:"";width:2px;height:38px;background:#8b8f92;margin-left:auto}
.tab .fav{width:28px;height:28px}
.tab span{width:118px;margin-left:15px;white-space:nowrap;letter-spacing:-.5px;-webkit-mask-image:linear-gradient(90deg,#000 70%,transparent 98%);mask-image:linear-gradient(90deg,#000 70%,transparent 98%)}
.tab .nofade{-webkit-mask-image:none;mask-image:none}
.tab .x{width:16px;height:16px;margin-left:8px;color:#4e5256}
.tab.active{width:233px;background:#fff;border-radius:16px 16px 0 0;padding-left:23px}
.tab.active .fav{width:26px;height:26px}
.tab.active .x{margin-left:12px}
.tab.active:after{background:none}
.tab.active + .tab{margin-left:-4px}
.tabs-right{margin-left:auto;display:flex;align-items:center;padding-right:31px}
.tabs-right .tab{width:224.500px}
.tabs-right .tab .x{margin-left:5px}
.plus{width:24px;height:24px;margin-left:27px}
.wc{width:20px;height:20px;margin:-10px 0 0 62px}
.plus + .wc{margin-left:131px}
.toolbar{height:64px;background:#fff;border-bottom:2px solid #dcdee0;display:flex;align-items:center;padding-left:27px}
.nav{width:26px;height:26px;margin-right:31px}
.omni{width:2937px;height:50px;margin-left:-3px;background:#f1f3f4;border-radius:25px;display:flex;align-items:center;padding-left:18px}
.url{font-size:22.500px;margin-left:15px;color:#6c7074;letter-spacing:.6px}
.url b{font-weight:400;color:#26292c}
.oi{width:27px;height:27px;margin-left:31px}
.oi.first{margin-left:auto}
.omni .oi:last-child{margin-right:18px}
.side{width:26px;height:26px;margin-left:26px}
.ava{width:38px;height:38px;margin-left:24px}
.update{width:146px;height:50px;margin-left:14px;border:2px solid #333;border-radius:25px;background:#f3f4f5;display:flex;align-items:center;padding-left:22px;font-size:20px;color:#43474b;letter-spacing:-.2px}
.update i{width:4px;height:24px;margin-left:29px;background:repeating-linear-gradient(#f0982f 0 4px,transparent 4px 10px)}

/* page */
.page{height:1729px;display:flex;background:#f4f6f9;overflow:hidden}
aside{width:447px;background:#f4f6f8;color:#5d6164;font-size:25.500px;overflow:hidden;flex:none}
.brand{height:121px;margin:0 17px 0 14px;border-bottom:2px solid #d3d7da;display:flex;align-items:center;padding-left:25px;font-size:26.200px;white-space:nowrap}
.brand span{margin-left:20px}
aside h1{font-size:42px;font-weight:400;color:#3a3f44;height:92px;line-height:105px;padding-left:31px;letter-spacing:-.6px}
.menu li{height:71.400px;margin:0 9px 0 14px;border-bottom:2px solid #d3d7da;display:flex;align-items:center}
.menu li svg:first-child{width:40px;height:34px;margin:0 17px 0 29px;fill:#343a40}
.menu .chev{width:12px;height:18px;margin-left:auto;margin-right:30px}
.sub + .menu li{height:71.200px}
.menu:first-of-type li:last-child{border:0}
.current{width:424px;height:64px;margin:3px 0 0 14px;border-radius:6px;background:#3d80e2;color:#fff;display:flex;align-items:center;font-weight:600;font-size:25px}
.current svg:first-child{width:32px;height:32px;margin:0 21px 0 33px}
.current .down{width:18px;height:12px;margin-left:auto;margin-right:29px}
.sub{padding-top:4px;height:560px;border-bottom:2px solid #d3d7da;margin-left:14px;margin-right:9px}
.sub li{height:69.200px;display:flex;align-items:center;padding-left:33px;color:#7a7e80;font-size:25px}
.sub li:before{content:"";width:32px;height:32px;border:3px solid #7c7f81;border-radius:50%;margin-right:13px;margin-left:-2px}
.asidebar{width:14px;flex:none;background:#e9ecee}
.asidebar i{display:block;height:1327px;background:#a9a9a9}
main{width:2929px;flex:none;padding-left:29px;background:linear-gradient(90deg,#c6c9cb,#d6dadc 12px,#e6e9eb 26px,#f4f6f9 30px)}
header{height:128px;margin-left:-29px;background:linear-gradient(90deg,#3874cc,#3d80e2 40px);display:flex;align-items:center;padding-left:43px;color:#fff;font-size:27px}
header b{margin-left:57px;padding-top:8px}
.ex{width:24px;height:24px;margin-left:auto}
.out{width:27px;height:23px;margin:0 45px 0 57px}
.card{height:1600px;margin:22px 29px 0 0;border-top:6px solid #3d80e2;border-radius:6px 6px 0 0;background:#fff;padding:0 37px 0 35px;width:2871px}
.top{height:424px;display:flex;justify-content:space-between;border-bottom:2px solid #e0e3e6}
.facts{padding:31px 0 0 2px;color:#3d4146;font-size:25px}
.facts h2{font-size:49px;font-weight:400;height:82px;line-height:68px;letter-spacing:0}
.facts p{height:39.900px;line-height:39.900px}
.actions{width:444px;padding-top:36px;display:flex;flex-direction:column;gap:15px}
.actions a{height:46px;border-radius:4px;color:#fff;font-size:22px;font-weight:600;text-align:center;line-height:42px}
.teal{background:#4393b8}.blue{background:#3d80e2}.green{background:#347a78}.redb{background:#d6534b}
.depts{height:90px;border-bottom:4px solid #3d80e2;width:400px;padding:38px 0 0 24px;font-size:24px;font-weight:600;color:#3d80e2}
.thead{height:69px;margin-top:16px;background:#3d80e2;color:#fff;font-weight:600;font-size:25px;display:flex;align-items:center;margin-bottom:3px}
.c1{width:143px;margin-left:2079px}.c2{letter-spacing:.5px}.c3{margin-left:auto;padding-right:14px}
.tr{height:85px;display:flex;align-items:center;color:#444;font-size:26px;border-top:2px solid #e2e4e6}
.tr:nth-child(even){background:#f1f1f2}
.tr i{width:22px;height:22px;margin:-7px 0 0 16px;background:#1a6fee;border-radius:3px;display:flex;align-items:center;justify-content:center}
.tr i:after{content:"";width:12px;height:6px;border:solid #fff;border-width:0 0 3px 3px;transform:rotate(-48deg);margin-top:-4px}
.tr span{margin-left:2185px}
.dl{display:flex;gap:7px;margin-top:41px}
.dl a{width:207px;height:46px;background:#347a78;color:#fff;font-size:22.500px;font-weight:600;border-radius:3px;line-height:40px;text-align:center;white-space:nowrap}
.dl .m{background:#d6534b;text-align:left;padding-left:9px}
.scroll{width:30px;flex:none;background:#f1f1f1;padding-top:12px}
.scroll svg{width:14px;height:8px;margin-left:9px}
.scroll i{display:block;width:22px;height:1396px;margin:11px 0 0 3px;background:#bcbcbc}
.scroll .dn{margin-top:282px}

/* shared form controls */
.win{position:absolute;background:#f0f0f0;font-family:"Liberation Sans",sans-serif;font-size:20px;letter-spacing:-.65px;color:#000;white-space:nowrap}
.win > div,.win div{flex:none}
.btn{border:3px solid;border-color:#fff #696969 #696969 #fff;background:#f0f0f0;display:flex;align-items:center;justify-content:center}
.in{border:3px solid;border-color:#7b7b7b #fff #fff #7b7b7b;display:flex;align-items:center}
.yel{background:#fffde0}
.combo{background:#fff;border:4px solid;border-color:#6f6f6f #fff #e6e6e6 #6f6f6f;display:flex;justify-content:flex-end}
.combo i{width:29px;background:#f0f0f0;border:2px solid;border-color:#eee #696969 #696969 #eee;display:flex;align-items:center;justify-content:center}
.combo i:after{content:"";border:7px solid transparent;border-top:8px solid #000;border-bottom:0}

/* back window */
.back{left:602px;top:161px;width:2004px;height:1182px;border:2px solid #6c7175;display:flex;justify-content:space-between}
.bleft{width:154px;overflow:hidden}
.btitle{height:42px;background:#fff;display:flex;align-items:center;gap:10px;padding-left:4px;color:#8c8c8c;font-family:"Open Sans";font-size:20px;letter-spacing:-.3px}
.bmenu{height:34px;background:#fff;display:flex;gap:25px;padding-left:11px;line-height:38px;color:#555;font-family:"Open Sans";font-size:20px;letter-spacing:-.2px}
.btools{height:135px;padding:15px 0 0 12px;display:flex;gap:17px}
.photo{width:105px;height:97px;border:3px solid #111;border-right-color:#555;border-bottom-color:#555;display:flex;align-items:center;justify-content:center}
.bell{width:60px;height:97px;border:3px solid #fff;border-bottom-color:#696969;padding-left:4px}
.bframe{margin-left:11px;height:922px;border-top:2px solid #a0a0a0;border-left:2px solid #a0a0a0;border-bottom:2px solid #a0a0a0}
.bout{height:32px;line-height:28px;padding-left:32px;letter-spacing:-.2px}
.brow{display:flex}
.vl{width:34px;padding:0 0 0 14px;display:flex;flex-direction:column}
.vl span{height:23px;line-height:22px}
.blist{width:120px;background:#fff;border:3px solid #777;border-right:0;border-bottom-color:#e4e4e4;overflow:hidden}
.blist p{height:28.300px;line-height:28px;padding-left:5px;letter-spacing:-.4px}
.blist .h,.an p:first-child{background:#f2f2f2}
.blist .ul{border-bottom:2px solid #000}
.r1{height:229px}.alla{height:34px;font-weight:700;font-size:21.500px;line-height:28px;padding-left:2px;letter-spacing:-.2px;margin-bottom:2px}
.an{height:181px}.an p{padding-left:45px}.an p:first-child{padding-left:14px}
.r2{height:231px}.hae{height:223px}.r2 .vl{padding-top:12px;padding-left:11px}
.coa{height:141px;font-weight:700;font-size:21.500px}.coa p{height:23px;line-height:22px;padding-left:2px;letter-spacing:.4px}.r3 .vl{padding-left:11px;padding-top:2px}
.r3{height:171px}
.auto{height:61px;display:flex;align-items:flex-start;padding-left:10px;gap:27px}
.auto b{width:53px;height:53px;border:3px solid #5fd13b;border-radius:50%;text-align:center;line-height:47px}
.auto span{padding-top:29px;letter-spacing:-.2px}
.smp{height:187px;margin-left:34px;width:112px}
.bstat{margin-top:4px;height:41px;border-top:2px solid #a0a0a0;padding-left:8px;line-height:38px;font-weight:700;font-size:21px;letter-spacing:.8px}
.bright{width:157px;overflow:hidden}
.bclose{height:76px;background:#fff;padding:12px 0 0 106px;color:#777}
.sys{margin-top:12px;width:134px;height:50px;background:#ea3a25;border-top:3px solid #777;color:#ffef3e;font-weight:700;font-size:32px;line-height:44px;letter-spacing:.3px;padding-left:1px}
.totest{margin-top:5px;width:138px;height:44px;border-right:6px solid #ea3a25}
.totest span{display:block;height:44px;border:3px solid #fff;border-right-color:#696969;border-bottom-color:#696969;border-left:0;font-weight:700;line-height:37px;font-size:21px;letter-spacing:.3px;padding-left:8px}
.rframe{margin-top:24px;width:153px;height:922px;border:2px solid #a0a0a0;border-left:0;padding-top:27px}
.wl{width:140px;display:flex;background:#808080;border-top:3px solid #777;border-bottom:3px solid #fff;overflow:hidden}
.wl .rows{width:110px;height:max-content;background:#fffde0;border-bottom:2px solid #000}
.wl h4{height:28px;background:#000}
.wl p{height:28.500px;line-height:28px;color:#ea3a25;letter-spacing:-.6px}
.w1{height:223px}.w2{height:223px;margin-top:13px}.w3{height:206px;margin-top:9px}
.w2 .rows,.w3 .rows{width:111px;border-right:2px solid #000}
.vs{width:30px;background:#f6f6f6;display:flex;flex-direction:column}
.vs i{height:29px;background:#f0f0f0;border:2px solid;border-color:#fff #696969 #696969 #fff;display:flex;align-items:center;justify-content:center}
.vs s{flex:1}
.vs .up:after{content:"";border:7px solid transparent;border-bottom:8px solid #000;border-top:0}
.vs .dw:after{content:"";border:7px solid transparent;border-top:8px solid #000;border-bottom:0}
.rb{height:51px;width:145px;border:3px solid;border-color:#fff #696969 #696969 #fff;margin-bottom:9px;line-height:44px;text-align:right;padding-right:11px;border-left:0}
.rb b{letter-spacing:.4px}
.w3 + .rb{margin-top:28px}
.yl{background:#fcfab9;padding-right:36px;border-width:6px 3px 4px 0;line-height:38px}
.rstat{height:44px;line-height:48px;font-weight:700;text-align:right;padding-right:9px;letter-spacing:0}

/* main window */
.main{left:758px;top:85px;width:1689px;height:1336px;border:2px solid #596065;overflow:hidden}
.title{height:42px;background:#fff;display:flex;align-items:center;padding:0 0 2px 7px;font-family:"Open Sans";font-size:20px;letter-spacing:-.15px}
.t1{width:1047px;margin-left:12px}
.cl{margin:0 17px 0 auto}
.mmenu{height:33px;background:#fff;padding-left:11px;line-height:36px;font-family:"Open Sans";font-size:20px}
.prog{height:16px;width:1656px;margin:11px 0 0 22px;border:2px solid #696969;border-right:0;border-bottom-color:#fff;padding:2px}
.prog i{display:block;width:55px;height:6px;background:#3b7fdc}
.frames{height:205px;margin-top:13px;display:flex;padding-left:14px}
.f1{width:557px;border:2px solid #a0a0a0;border-bottom:0}
.lg{display:block;width:max-content;background:#f0f0f0;height:22px;line-height:22px;margin:-12px 0 0 12px;padding:0 2px}
.f1 > .lg{letter-spacing:-.9px}
.f1a{height:119px;display:flex}
.idcol{width:389px}
.arrows{height:38px;display:flex;align-items:center;padding-left:18px}
.results{width:101px;height:30px;margin:0 5px 0 0;background:#8484f4;border:2px solid #777;border-right-color:#fff;border-bottom-color:#fff;text-align:center;line-height:25px}
.fwd{margin-top:2px}
.coin{margin:-4px 0 0 12px}
.idrow{display:flex;height:59px;padding-left:19px;gap:2px}
.id{width:204px;height:55px;background:#fff;border:3px solid #6f6f6f;border-right-color:#fff;border-bottom-color:#fff;font-weight:700;font-size:33px;line-height:48px;letter-spacing:1.300px;padding-left:3px}
.spin{width:33px;display:flex;flex-direction:column}
.spin i{height:29.500px;border:2px solid;border-color:#fff #696969 #696969 #fff;text-align:center;font-style:normal;line-height:24px}
.os{height:22px;line-height:22px;padding-left:19px}
.scan{width:105px;height:102px;margin-top:9px;flex-direction:column;justify-content:space-between;padding:11px 0 2px}
.note{width:54px;height:58px;margin:9px 0 0 6px}
.cos{width:530px;height:36px;margin-left:19px}
.mru{height:34px;display:flex;padding:1px 0 0 17px;align-items:center}
.mru span{width:49px;letter-spacing:-1px}.mru .combo{width:186px;height:34px;border-width:2px}
.f2{width:1104px;height:203px;margin-left:3px;border:2px solid #a0a0a0;border-left-color:#fff;display:flex}
.pl{width:887px}
.sd{height:32px;padding:3px 0 0 546px;display:flex;align-items:center}
.sd span{width:107px}.sd .in{width:134px;height:31px;padding-left:1px;letter-spacing:.3px}
.lbls{height:56px;display:flex;align-items:flex-end;padding-left:1px}
.cc{width:165px;height:33px;justify-content:center;letter-spacing:-.6px}
.sn{width:298px;margin-left:8px}.fn{width:333px}
.se{width:79px;height:42px;margin-bottom:2px}
.vals{height:54px;display:flex;gap:5px;padding:1px 0 0 1px;color:#6e6e6e}
.vals .in{background:#fff}
.v1{width:166px;font-weight:700;font-size:32px;letter-spacing:.6px;padding-left:2px}.v2{width:293px;font-size:26px;letter-spacing:1.500px}.v3{width:413px;font-size:26px;letter-spacing:.5px}
.vals .v2,.vals .v3{padding:0 0 10px 3px}
.addr{width:883px;height:29px;margin:6px 0 0 1px;padding-left:1px;letter-spacing:-.45px}
.pr{width:213px;padding-top:19px}
.prb{display:flex;gap:2px;padding-left:69px;height:37px}
.prb .btn{height:34px;width:83px}.prb .dots{width:46px}
.prr{display:flex;height:42px;align-items:flex-start;line-height:28px}
.prr span{width:63px;text-align:right;margin-right:6px;letter-spacing:-.3px}
.prr .in{width:131px;height:32px;background:#fff;color:#777;padding-left:2px;line-height:20px}
.prr .dob{letter-spacing:.1px}
.body{display:flex;height:948px;padding-top:1px}
.sheet{width:1493px;margin-left:18px}
.tabs{display:flex;height:36px}
.tb{width:212px;border:2px solid #696969;border-top-width:3px;border-left-color:#fff;border-radius:10px 10px 0 0;text-align:center;line-height:30px}
.tb.on{border-bottom:0;border-right-width:4px}
.tb.on b{display:inline-block;height:28px;line-height:24px;margin-top:4px;border:2px dotted #000;letter-spacing:-.3px;padding:0 2px}
.fill{width:433px;border-bottom:2px solid #808080}
.tag{position:relative;z-index:1;width:131px;height:37px;margin:23px 0 0 282px}
.pane{height:906px;border-left:2px solid #696969;border-right:4px solid #696969;border-bottom:6px solid #808080}
.r0{display:flex;height:51px;padding:15px 0 0 15px;align-items:flex-start}
.va,.rs{height:31px;margin-top:3px;justify-content:center;width:261px;letter-spacing:-.5px}.rs{width:219px;margin-left:15px;letter-spacing:-.1px}
.sfp{width:246px;height:37px;margin-left:477px;border:2px solid #a0a0a0;display:flex;align-items:center;padding-left:6px;letter-spacing:-.95px}
.pb{width:37px;height:33px;border-width:2px 3px 3px 2px}
.pb:first-of-type{margin-left:auto}
.pb svg{width:22px;height:24px}
.r00{display:flex;height:542px;padding:8px 0 0 15px}
.grid{margin-top:7px;width:1319px;height:527px;background:#808080;border:2px solid #808080;border-right-color:#fff;border-bottom-color:#fff}
.g{display:grid;grid-template-columns:198px 431px 116px 82px 65px 146px 47px 90px 31px;height:28.600px;width:1206px;color:#2a6bd2;font-weight:700;line-height:26px;letter-spacing:-.1px}
.g span{background:#fffde0;border-right:3px solid #000;border-bottom:3px solid #000;padding-left:5px;overflow:hidden}
.g span:nth-child(5),.g span:nth-child(7){text-align:center;padding:0 4px 0 0}
.g.hd span:nth-child(5),.g.hd span:nth-child(7){padding:0}
.g.hd span,.g span:first-child{background:#000;color:#fffde0;border-color:#fffde0;border-width:0 2px 2px 0;letter-spacing:.35px}
.g.hd span:last-child{padding-left:7px}
.g.hi span:nth-child(2){background:#ea3a25;color:#ffef3e}
.g .ck{padding:1px 0 0 1px}
.ck:before{content:"";display:block;width:20px;height:24px;border:2px solid #333;background:#fff}
.ck:after{content:"";display:block;width:13px;height:6px;border:solid #187018;border-width:0 0 4px 4px;transform:rotate(-52deg);margin:-19px 0 0 4px}
.outs{width:123px;height:528px;margin-left:8px;background:#808080;border:3px solid #777;border-right-color:#fff;border-bottom-color:#fff}
.outs h5{background:#000;color:#fff;font-weight:400;font-size:20px;text-align:center;height:29px;line-height:29px}
.outs p{height:30px;background:#fffde0;border:2px solid #000;border-left:0}
.r3a{display:flex;padding:2px 0 0 15px;height:109px}
.left3{width:903px}
.cats{display:flex;gap:2px;height:25px;line-height:22px;text-align:center}
.cats span{width:136.600px;border-left:3px solid #808080;border-right:1px solid #fff;border-bottom:2px solid #fff}
.cats .all{width:58px;background:#fbee3f;margin-right:4px}.cats .bio{width:139px;background:#5ccf3a;letter-spacing:-.6px}
.combos{display:flex;padding-top:7px}
.combos .combo{height:36px;margin-top:17px}
.k1{width:191px}.k2{width:203px;margin-left:11px}.k3{width:152px;margin-left:12px}.k4{width:187px;margin-left:12px}
.k4 em{font-style:normal;background:#2b6cd0;color:#fff;height:24px;line-height:24px;margin-right:auto;letter-spacing:-.5px}
.add{width:121px;height:75px;margin-left:12px;flex-direction:column;justify-content:space-between;padding:2px 0}
.cond{width:295px;height:95px;margin:7px 0 0 8px;border:2px solid #a0a0a0}
.cond .lg{margin-top:-9px}
.cr{display:flex;align-items:center}
.cr span:first-child{width:119px;text-align:right;margin-right:9px}
.cr i{width:30px;height:28px;background:#fff;border:3px solid #808080;border-right-color:#fff;border-bottom-color:#fff;margin-right:5px}
.cr .sm{width:21px;height:20px;margin:-6px 11px 0 3px}
.cr span:last-child{margin-left:5px}
.cr:nth-child(2) span:first-child{margin-top:-6px}.cr:nth-child(2) span:last-child{margin-top:8px}
.cr:nth-child(2){height:29px}.cr:nth-child(3){height:34px}
.r4{display:flex;padding-left:12px}
.comm{width:546px;height:191px;border:2px solid #a0a0a0;padding:0 5px}
.comm .combo{height:34px;border-width:3px}
.comm .lg{margin-left:8px;margin-bottom:6px}
.ta{height:93px;margin:2px 0 6px}
.boxes{width:429px;margin-left:10px}
.gb{height:77px;background:#e1e1e1;justify-content:flex-end}
.gb svg{width:30px;height:71px;padding:4px 8px;background:#f0f0f0}
.gb2{height:106px;margin-top:5px}
.ab{width:90px;height:109px;margin:77px 0 0 72px;flex-direction:column;justify-content:space-between;text-align:center;line-height:23px;padding:0 0 3px}
.ab span{margin-top:-2px}
.ab + .ab{margin-left:10px}
.ab:last-child svg,.ab.dis svg{margin-top:8px}
.dis{color:#888}
.rail{width:151px;margin:93px 0 0 16px}
.rail .btn{width:150px;height:94px;flex-direction:column;justify-content:space-between;text-align:center;padding:9px 0 3px;line-height:24px;border-bottom-width:2px}
.rail .btn:first-child{height:93px;padding-top:2px;padding-bottom:4px}
.rail .hp{padding-top:12px}
.rail .btn:nth-child(5){padding-top:3px}
.rail .ph{width:146px;padding-top:3px}
.rail .hist{margin-top:101px;height:94px;padding-top:9px}.rail .canc{padding-top:9px}
.stat{display:flex;height:44px;margin-top:20px;line-height:40px}
.s1,.s2,.s4{border:2px solid #a0a0a0;border-right-color:#fff;border-bottom-color:#fff}
.s1{width:171px;padding-left:6px;border-left:0;letter-spacing:-.2px}.s2{width:169px;margin-left:4px;padding-left:31px;letter-spacing:.2px}.s3{width:354px;margin-left:4px;letter-spacing:-.4px}.s4{width:168px;margin-left:4px;padding-left:6px;letter-spacing:.2px}
.stat span{margin:1px 7px 0 auto;letter-spacing:-.55px}

/* connection bar */
.rdp{position:absolute;left:1071px;top:0;width:1277px;height:58px;background:#3c4a6a;clip-path:polygon(0 0,100% 0,1249px 58px,31px 58px)}
.bar{height:55px;margin:0 2px;background:linear-gradient(#84a4d8,#4a74b4 27px,#15387f 27px,#173c86 52px,#8aa6d6 54px);clip-path:polygon(0 0,100% 0,1247px 100%,31px 100%);display:flex;align-items:center;color:#fff}
.pin{width:50px;height:49px;margin:-6px 0 0 83px;background:linear-gradient(#6a9ae0,#3e76cc 27px,#1f4fa8 27px);display:flex;align-items:center;justify-content:center}
.sig{margin:-4px 0 0 12px}
.ip{width:128px;margin:-2px 0 0 401px;font-size:22px;letter-spacing:0;white-space:nowrap}
.mn{width:20px;height:5px;background:#fff;margin:18px 30px 0 349px}
.rs2{margin:-4px 28px 0 0}
.rs2 + svg{margin-top:-4px}

/* watermark: pale letters with a soft grey outline */
.wm{position:absolute;width:900px;text-align:center;font-family:"Noto Sans",sans-serif;font-size:49px;color:rgba(255,255,255,.6);-webkit-text-stroke:6px rgba(140,140,140,.3);paint-order:stroke fill}
.wm p{height:63px;line-height:63px;white-space:nowrap}
.wm p + p{font-family:"DejaVu Sans Condensed","DejaVu Sans",sans-serif;font-stretch:condensed;font-size:50px;letter-spacing:.9px}
.a{left:404px;top:390px}.b{left:2114px;top:390px}.c{left:1258px;top:875px}.d{left:404px;top:1361px}.e{left:2114px;top:1361px}
.wm.c{color:rgba(122,122,122,.75);-webkit-text-stroke-color:rgba(190,190,190,.4)}
.handle{position:absolute;left:3380px;top:912px;width:100px;height:100px;border-radius:50%;background:#4b4c50;display:flex;align-items:center;padding-left:22px}

/* taskbar */
.taskbar{position:absolute;left:0;right:0;bottom:0;height:71px;background:#10100e;display:flex}
.tk{width:87.200px;flex:none;display:flex;align-items:center;justify-content:center;border:solid transparent;border-width:4px 0}
.run{border-bottom-color:#7eb2ea;width:71px;margin:0 8.100px}
.two{border-image:linear-gradient(90deg,#7eb2ea 78%,#5d88b8 78%) 4;border-width:0 0 4px;padding-top:4px}
.cur{background:#9c602c;border-color:#9c602c;border-bottom-color:#f58634;width:85px;margin-left:1px}
.tray{display:flex;align-items:center;margin-left:auto;padding-right:7px;color:#fff;font-size:20px;line-height:31px;text-align:center}
.xa{width:29px;height:29px;margin-right:14px}
.net{margin-right:12px}.vol{margin-right:19px}
.lang{margin-left:12px;width:65px}.clock{width:110px;margin-left:7px}
.lang,.clock{letter-spacing:-.6px}
.nt{margin-left:29px}
.peek{width:1px;height:71px;background:#777;margin-left:36px}
```
